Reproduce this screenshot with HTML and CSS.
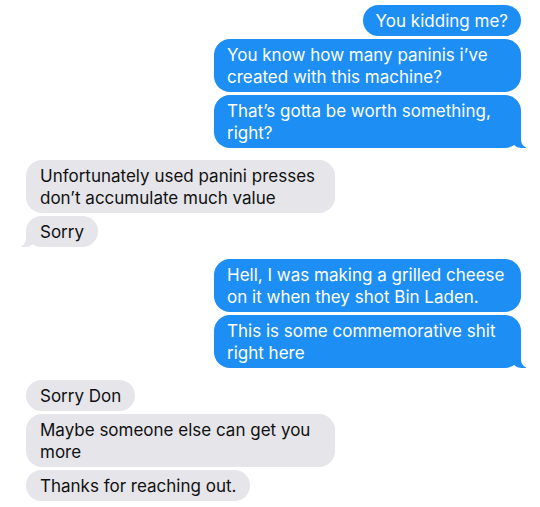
FILE: index.html
```html
<!DOCTYPE html>
<html>
<head>
<meta charset="utf-8">
<link rel="stylesheet" href="styles.css">
</head>
<body>
<div class="chat">
  <div class="group sent">
    <div class="bubble">You kidding me?</div>
    <div class="bubble">You know how many paninis i’ve created with this machine?</div>
    <div class="bubble tail">That’s gotta be worth something, right?</div>
  </div>
  <div class="group received">
    <div class="bubble">Unfortunately used panini presses don’t accumulate much value</div>
    <div class="bubble tail">Sorry</div>
  </div>
  <div class="group sent">
    <div class="bubble">Hell, I was making a grilled cheese on it when they shot Bin Laden.</div>
    <div class="bubble tail">This is some commemorative shit right here</div>
  </div>
  <div class="group received">
    <div class="bubble">Sorry Don</div>
    <div class="bubble">Maybe someone else can get you more</div>
    <div class="bubble">Thanks for reaching out.</div>
  </div>
</div>
</body>
</html>
```
FILE: styles.css
```css
html, body {
  margin: 0;
  padding: 0;
  background: #ffffff;
}
body {
  width: 540px;
  height: 507px;
  overflow: hidden;
  font-family: "Inter", "Liberation Sans", sans-serif;
  font-size: 17px;
}
.chat {
  display: flex;
  flex-direction: column;
  gap: 12px;
  padding: 5px 19px 0 26px;
}
.group {
  display: flex;
  flex-direction: column;
  gap: 3px;
}
.sent {
  align-items: flex-end;
}
.received {
  align-items: flex-start;
}
.bubble {
  position: relative;
  max-width: 281px;
  padding: 5px 13px 4px 13px;
  line-height: 22px;
  border-radius: 16px;
}
.sent .bubble {
  background: #1d8ef3;
  color: #ffffff;
}
.received .bubble {
  background: #e5e5ea;
  color: #111111;
  padding-left: 14px;
  padding-right: 14px;
}
.sent .tail::before {
  content: "";
  position: absolute;
  bottom: 0;
  right: -5px;
  width: 16px;
  height: 16px;
  background: #1d8ef3;
  border-bottom-left-radius: 12px;
}
.sent .tail::after {
  content: "";
  position: absolute;
  bottom: 0;
  right: -9px;
  width: 9px;
  height: 16px;
  background: #ffffff;
  border-bottom-left-radius: 8px;
}
.received .tail::before {
  content: "";
  position: absolute;
  bottom: 0;
  left: -5px;
  width: 16px;
  height: 16px;
  background: #e5e5ea;
  border-bottom-right-radius: 12px;
}
.received .tail::after {
  content: "";
  position: absolute;
  bottom: 0;
  left: -9px;
  width: 9px;
  height: 16px;
  background: #ffffff;
  border-bottom-right-radius: 8px;
}
```
